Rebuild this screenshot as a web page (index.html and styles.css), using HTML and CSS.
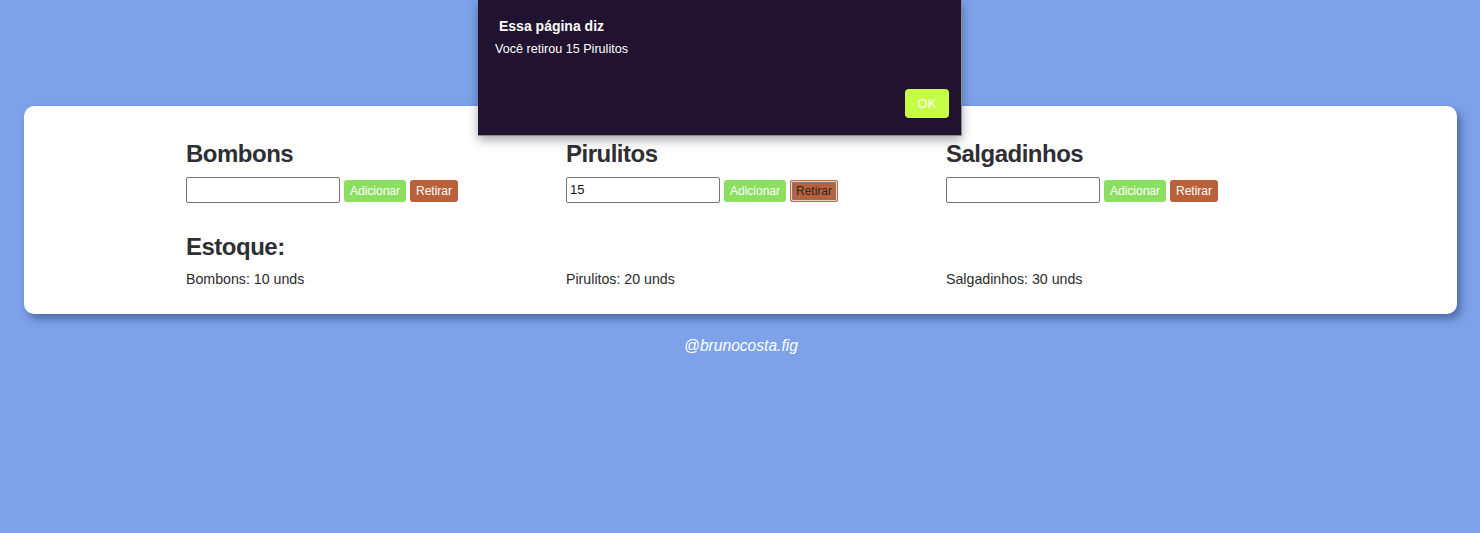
FILE: index.html
```html
<!DOCTYPE html>
<html lang="pt-BR">
<head>
<meta charset="utf-8">
<title>Estoque</title>
<link rel="stylesheet" href="styles.css">
</head>
<body>
<main class="page">
  <section class="card">
    <div class="grid">
      <div class="col">
        <h3 class="title">Bombons</h3>
        <div class="controls">
          <input class="field" type="text" value="">
          <button class="btn btn-add">Adicionar</button>
          <button class="btn btn-remove">Retirar</button>
        </div>
      </div>
      <div class="col">
        <h3 class="title">Pirulitos</h3>
        <div class="controls">
          <input class="field" type="text" value="15">
          <button class="btn btn-add">Adicionar</button>
          <button class="btn btn-remove focused">Retirar</button>
        </div>
      </div>
      <div class="col">
        <h3 class="title">Salgadinhos</h3>
        <div class="controls">
          <input class="field" type="text" value="">
          <button class="btn btn-add">Adicionar</button>
          <button class="btn btn-remove">Retirar</button>
        </div>
      </div>
      <div class="col col-full">
        <h3 class="title stock-title">Estoque:</h3>
      </div>
      <div class="col"><p class="stock">Bombons: 10 unds</p></div>
      <div class="col"><p class="stock">Pirulitos: 20 unds</p></div>
      <div class="col"><p class="stock">Salgadinhos: 30 unds</p></div>
    </div>
  </section>
  <footer class="footer">@brunocosta.fig</footer>
</main>

<div class="dialog" role="alertdialog">
  <div class="dialog-title">Essa página diz</div>
  <div class="dialog-msg">Você retirou 15 Pirulitos</div>
  <div class="dialog-actions">
    <button class="dialog-ok">OK</button>
  </div>
</div>
</body>
</html>
```
FILE: styles.css
```css
* { box-sizing: border-box; }

html, body {
  margin: 0;
  padding: 0;
}

body {
  background: #7da2ea;
  font-family: "Liberation Sans", Arial, Helvetica, sans-serif;
  color: #2b2b2b;
  min-height: 533px;
}

.page {
  padding: 106px 23px 0 24px;
}

.card {
  background: #ffffff;
  border-radius: 10px;
  box-shadow: 4px 5px 8px rgba(40, 60, 110, 0.55);
  padding: 34px 0 24px 1px;
}

.grid {
  display: grid;
  grid-template-columns: repeat(3, 380px);
  justify-content: center;
}

.col {
  padding: 0 15px;
}

.col-full {
  grid-column: 1 / -1;
}

.title {
  margin: 0;
  font-size: 24px;
  line-height: 28.8px;
  font-weight: bold;
  letter-spacing: -0.5px;
  color: #2e2e33;
}

.controls {
  display: flex;
  align-items: flex-end;
  gap: 4px;
  margin-top: 8px;
}

.field {
  width: 154px;
  height: 26px;
  border: 1px solid #767676;
  border-radius: 2px;
  padding: 1px 3px;
  font-family: "Liberation Sans", Arial, sans-serif;
  font-size: 13px;
  color: #111;
  background: #fff;
}

.btn {
  height: 22px;
  margin-bottom: 1px;
  border: none;
  border-radius: 3px;
  padding: 0 6px;
  font-family: "Liberation Sans", Arial, sans-serif;
  font-size: 12px;
  color: #ffffff;
  cursor: pointer;
}

.btn-add {
  background: #8cdf61;
}

.btn-remove {
  background: #b9613a;
}

.btn-remove.focused {
  color: #2a2a2a;
  box-shadow: inset 0 0 0 1px #c56a44, inset 0 0 0 2px #e7d5cc, inset 0 0 0 3px #7a7a7a;
}

.stock-title {
  margin-top: 30px;
}

.stock {
  margin: 7px 0 0;
  font-size: 14.2px;
  line-height: 21px;
  color: #2b2b2b;
}

.footer {
  margin-top: 23px;
  text-align: center;
  font-style: italic;
  font-size: 15.6px;
  color: #ffffff;
  padding-left: 1px;
}

.dialog {
  position: absolute;
  top: 0;
  left: 478px;
  width: 484px;
  height: 136px;
  background: #21132f;
  border-right: 1px solid #8a8a90;
  border-bottom: 1px solid #8a8a90;
  box-shadow: 0 4px 10px rgba(0, 0, 0, 0.35);
  color: #ffffff;
  padding: 17px 12px 0 16px;
  display: flex;
  flex-direction: column;
}

.dialog-title {
  font-size: 14px;
  font-weight: bold;
  line-height: 18px;
  padding-left: 5px;
}

.dialog-msg {
  font-size: 12.6px;
  line-height: 15px;
  margin-top: 7px;
  padding-left: 1px;
}

.dialog-actions {
  display: flex;
  justify-content: flex-end;
  margin-top: 32px;
}

.dialog-ok {
  width: 44px;
  height: 29px;
  border: none;
  border-radius: 4px;
  background: #c5fe44;
  color: #ffffff;
  font-family: "Liberation Sans", Arial, sans-serif;
  font-size: 13px;
  padding: 0;
}
```
